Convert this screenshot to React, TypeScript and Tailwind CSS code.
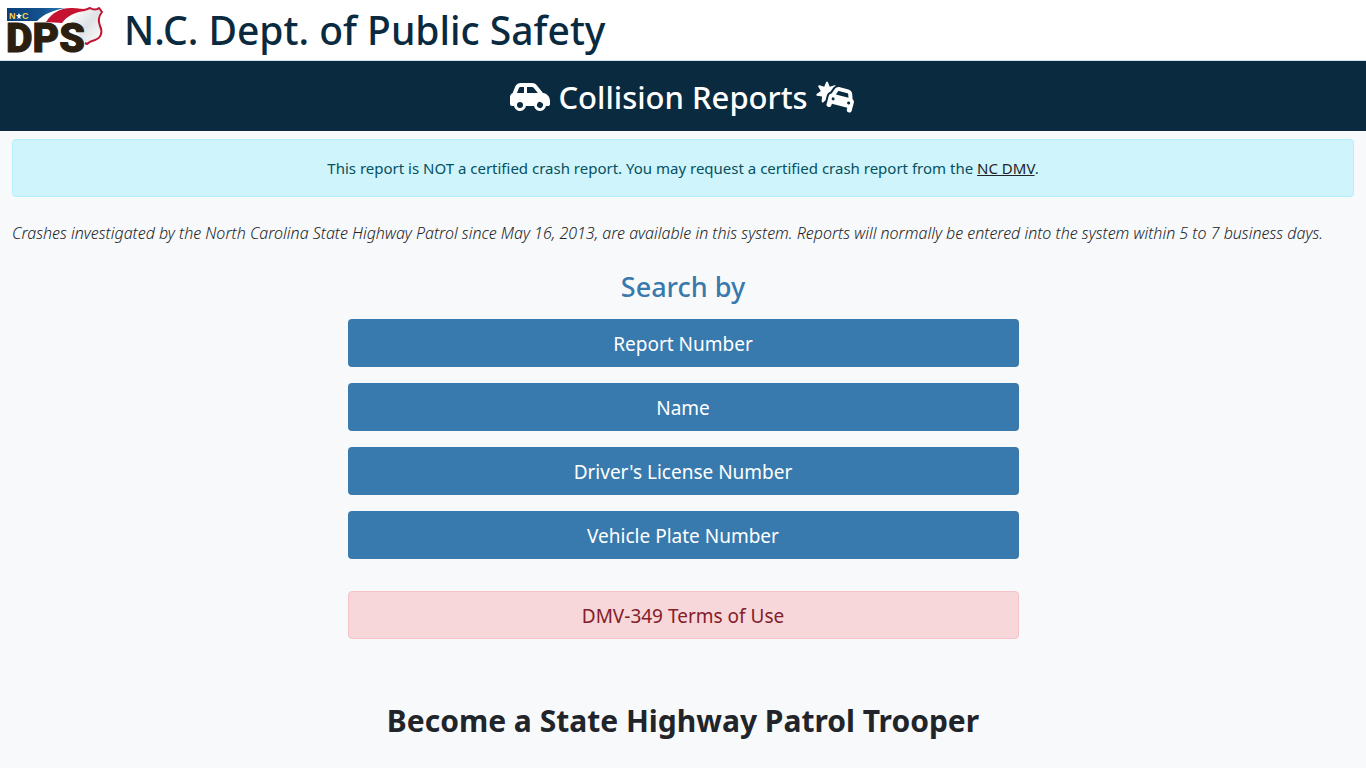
import { FaCarSide, FaCarBurst } from 'react-icons/fa6';

const searchOptions = [
  { id: 'report', label: 'Report Number' },
  { id: 'name', label: 'Name' },
  { id: 'license', label: "Driver's License Number" },
  { id: 'plate', label: 'Vehicle Plate Number' },
];

function Logo() {
  return (
    <svg viewBox="0 -6 98 60" className="w-[98px] h-[60px] shrink-0 overflow-visible" role="img" aria-label="NC DPS">
      <defs>
        <linearGradient id="banner" x1="0" x2="1" y1="0" y2="0">
          <stop offset="0" stopColor="#0a3f78" />
          <stop offset="0.6" stopColor="#14528f" />
          <stop offset="1" stopColor="#2f7fbd" />
        </linearGradient>
        <linearGradient id="shield" x1="0" x2="1" y1="0" y2="1">
          <stop offset="0" stopColor="#ffffff" />
          <stop offset="0.5" stopColor="#dfe2e5" />
          <stop offset="1" stopColor="#ffffff" />
        </linearGradient>
      </defs>
      {/* Banner */}
      <path d="M1 2H60C47 4 38 8 31 15H1Z" fill="url(#banner)" />
      {/* Shield */}
      <path
        d="M71 5C76 6 81 4 84 2C87 4 91 4 93 2L96 6C92 11 92 15 94 20C97 26 95 32 89 34C85 35 83 36 81 38L74 30L65 15Z"
        fill="url(#shield)"
      />
      <path
        d="M77 4C80 4 82 3 84 2C87 4 91 4 93 2L96 6C92 11 92 15 94 20C97 26 95 32 89 34C85 35 83 36 81 38L79 37"
        fill="none"
        stroke="#c41230"
        strokeWidth="2"
        strokeLinejoin="round"
      />
      <path d="M40 16C46 7 54 2 65 2C71 2 74 3 79 3V5C69 6 61 10 56 17Z" fill="#c41230" />
      <text x="3" y="13" fontFamily="Liberation Sans, sans-serif" fontWeight="700" fontSize="9" fill="#ffd23f">N</text>
      <path d="M13 7L14 9H16L14 11L15 13L13 12L11 13L12 11L10 9H12Z" fill="#ffffff" />
      <text x="16" y="13" fontFamily="Liberation Sans, sans-serif" fontWeight="700" fontSize="9" fill="#ffd23f">C</text>
      <text
        x="0"
        y="46"
        fontFamily="Roboto, sans-serif"
        fontWeight="900"
        fontSize="41"
        fill="#2b2010"
        stroke="#2b2010"
        strokeWidth="1"
      >
        DPS
      </text>
    </svg>
  );
}

export default function App() {
  return (
    <div className="min-h-screen bg-[#f8f9fb] text-[#212529] font-['Noto_Sans',sans-serif] text-base leading-6">
      {/* Header */}
      <header className="flex items-center gap-5 h-[61px] px-1.5 bg-white border-b border-[#cfe2ec]">
        <Logo />
        <span className="text-[39px] leading-[48px] font-medium text-[#0a2a40]">N.C. Dept. of Public Safety</span>
      </header>

      {/* Title bar */}
      <div className="flex items-center justify-center gap-2 h-[70px] pt-0.5 bg-[#0a2a40] text-white">
        <FaCarSide className="w-10 h-8" />
        <h1 className="text-[31px] leading-10 font-medium">Collision Reports</h1>
        <FaCarBurst className="w-10 h-8" />
      </div>

      <main className="px-3 pt-2">
        <div className="p-4 text-center text-[15px] leading-6 bg-[#cff4fc] border border-[#b6effb] rounded text-[#055160]">
          This report is NOT a certified crash report. You may request a certified crash report from the{' '}
          <a href="#dmv" className="underline text-[#212529]">NC DMV</a>.
        </div>

        <p className="mt-6 italic font-light">
          Crashes investigated by the North Carolina State Highway Patrol since May 16, 2013, are available in this
          system. Reports will normally be entered into the system within 5 to 7 business days.
        </p>

        {/* Search options */}
        <section className="w-1/2 mx-auto mt-6">
          <h2 className="text-[27px] leading-9 font-medium text-center text-[#387aad]">Search by</h2>
          <div className="flex flex-col gap-4 mt-3.5">
            {searchOptions.map((option) => (
              <button
                key={option.id}
                type="button"
                className="h-12 pt-0.5 rounded bg-[#387aad] hover:bg-[#2f6893] text-[19px] text-white transition-colors"
              >
                {option.label}
              </button>
            ))}
          </div>
          <button
            type="button"
            className="w-full h-12 pt-0.5 mt-8 rounded border border-[#f5c2c7] bg-[#f8d7da] text-[19px] text-[#842029]"
          >
            DMV-349 Terms of Use
          </button>
        </section>

        <h2 className="mt-[62px] text-[30px] leading-10 font-bold text-center">Become a State Highway Patrol Trooper</h2>
      </main>
    </div>
  );
}
